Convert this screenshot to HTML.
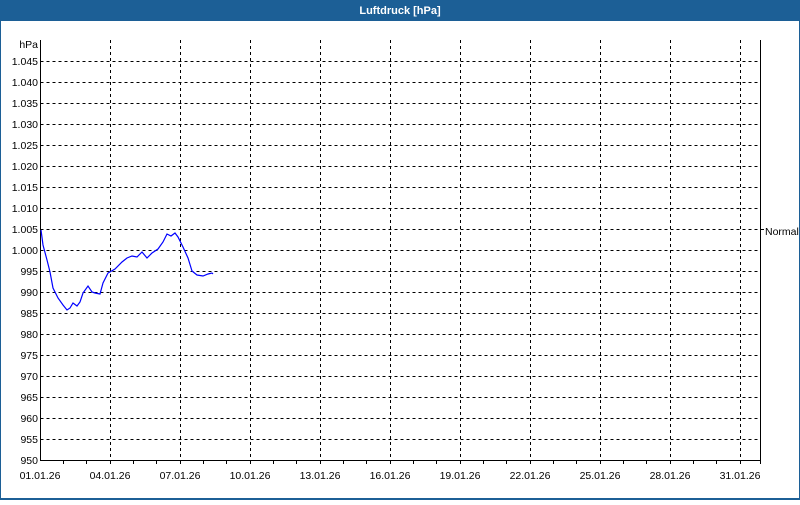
<!DOCTYPE html>
<html><head><meta charset="utf-8"><style>
html,body{margin:0;padding:0;background:#fff;}
body{width:800px;height:500px;overflow:hidden;font-family:"Liberation Sans",sans-serif;}
</style></head><body>
<svg width="800" height="500" xmlns="http://www.w3.org/2000/svg" font-family="Liberation Sans, sans-serif" font-size="10.5">
<rect x="0" y="0" width="800" height="500" fill="#fff"/>
<rect x="0" y="0" width="800" height="21" fill="#1c5f96"/>
<rect x="0" y="0" width="1" height="500" fill="#1c5f96"/>
<rect x="799" y="0" width="1" height="500" fill="#1c5f96"/>
<rect x="0" y="498" width="800" height="2" fill="#1c5f96"/>
<text x="400" y="14" fill="#fff" font-weight="bold" font-size="11" text-anchor="middle">Luftdruck [hPa]</text>
<g stroke="#000" stroke-width="1" stroke-dasharray="3,3" shape-rendering="crispEdges">
<path d="M40.5 61.5H760M40.5 82.5H760M40.5 103.5H760M40.5 124.5H760M40.5 145.5H760M40.5 166.5H760M40.5 187.5H760M40.5 208.5H760M40.5 229.5H760M40.5 250.5H760M40.5 271.5H760M40.5 292.5H760M40.5 313.5H760M40.5 334.5H760M40.5 355.5H760M40.5 376.5H760M40.5 397.5H760M40.5 418.5H760M40.5 439.5H760"/>
<path d="M110.5 40V460M180.5 40V460M250.5 40V460M320.5 40V460M390.5 40V460M460.5 40V460M530.5 40V460M600.5 40V460M670.5 40V460M740.5 40V460"/>
</g>
<g stroke="#000" stroke-width="1" shape-rendering="crispEdges" fill="none">
<path d="M40.5 40V460.5H760.5V40"/>
<path d="M63.5 460V464M86.5 460V464M110.5 460V464M133.5 460V464M156.5 460V464M180.5 460V464M203.5 460V464M226.5 460V464M250.5 460V464M273.5 460V464M296.5 460V464M320.5 460V464M343.5 460V464M366.5 460V464M390.5 460V464M413.5 460V464M436.5 460V464M460.5 460V464M483.5 460V464M506.5 460V464M530.5 460V464M553.5 460V464M576.5 460V464M600.5 460V464M623.5 460V464M646.5 460V464M670.5 460V464M693.5 460V464M716.5 460V464M740.5 460V464M760.5 460V464"/>
<path d="M760 229.5H764"/>
</g>
<g text-anchor="end" fill="#000">
<text x="38" y="48">hPa</text>
<text x="38" y="65">1.045</text><text x="38" y="86">1.040</text><text x="38" y="107">1.035</text><text x="38" y="128">1.030</text><text x="38" y="149">1.025</text><text x="38" y="170">1.020</text><text x="38" y="191">1.015</text><text x="38" y="212">1.010</text><text x="38" y="233">1.005</text><text x="38" y="254">1.000</text><text x="38" y="275">995</text><text x="38" y="296">990</text><text x="38" y="317">985</text><text x="38" y="338">980</text><text x="38" y="359">975</text><text x="38" y="380">970</text><text x="38" y="401">965</text><text x="38" y="422">960</text><text x="38" y="443">955</text><text x="38" y="464">950</text>
</g>
<g text-anchor="middle" fill="#000">
<text x="40" y="479">01.01.26</text><text x="110" y="479">04.01.26</text><text x="180" y="479">07.01.26</text><text x="250" y="479">10.01.26</text><text x="320" y="479">13.01.26</text><text x="390" y="479">16.01.26</text><text x="460" y="479">19.01.26</text><text x="530" y="479">22.01.26</text><text x="600" y="479">25.01.26</text><text x="670" y="479">28.01.26</text><text x="740" y="479">31.01.26</text>
</g>
<text x="765" y="235" fill="#000">Normal</text>
<polyline fill="none" stroke="#0000ff" stroke-width="1.2" points="41,230 43,245 47,260 50,272 53,288 58,298 63,305 67,310 70,308 73,303 77,306 80,302 83,293 88,286 92,292 95,293 100,294 103,283 108,273 115,269 122,262 127,258 132,256 137,257 142,252 147,258 152,253 158,249 163,242 167,234 171,236 175,233 178,237 183,247 188,258 192,271 197,275 203,276 208,274 212,273 213,274"/>
</svg>
</body></html>
